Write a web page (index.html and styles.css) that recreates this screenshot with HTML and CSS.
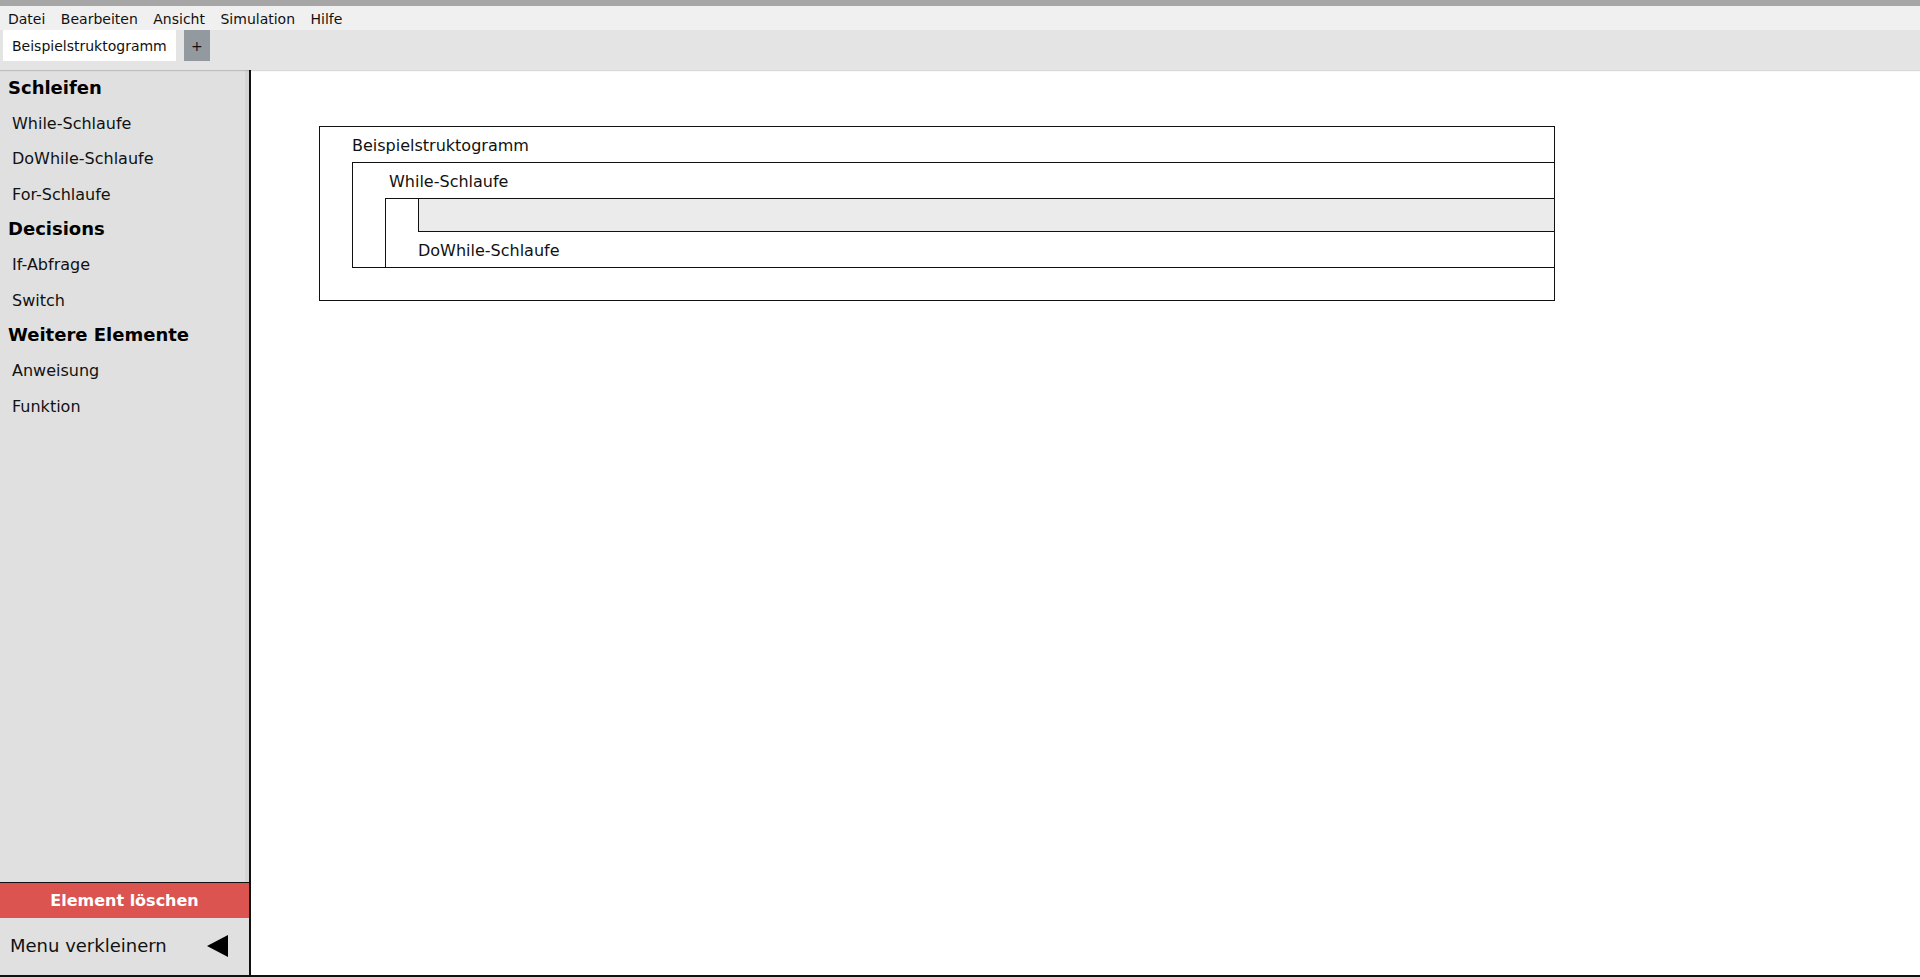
FILE: index.html
```html
<!DOCTYPE html>
<html lang="de">
<head>
  <meta charset="UTF-8" />
  <meta name="viewport" content="width=device-width, initial-scale=1.0" />
  <title>Struktogramm Editor</title>
  <link rel="stylesheet" href="styles.css">
</head>
<body>
  <div class="app">
    <nav class="menubar">
      <span class="menu-item">Datei</span>
      <span class="menu-item">Bearbeiten</span>
      <span class="menu-item">Ansicht</span>
      <span class="menu-item">Simulation</span>
      <span class="menu-item">Hilfe</span>
    </nav>

    <div class="tabbar">
      <div class="tab active">Beispielstruktogramm</div>
      <div class="tab-add">+</div>
    </div>

    <div class="workspace">
      <aside class="sidebar">
        <div class="palette">
          <div class="palette-head">Schleifen</div>
          <div class="palette-item">While-Schlaufe</div>
          <div class="palette-item">DoWhile-Schlaufe</div>
          <div class="palette-item">For-Schlaufe</div>
          <div class="palette-head">Decisions</div>
          <div class="palette-item">If-Abfrage</div>
          <div class="palette-item">Switch</div>
          <div class="palette-head">Weitere Elemente</div>
          <div class="palette-item">Anweisung</div>
          <div class="palette-item">Funktion</div>
        </div>
        <div class="delete-btn">Element löschen</div>
        <div class="collapse">
          <span>Menu verkleinern</span>
          <span class="arrow-left"></span>
        </div>
      </aside>

      <main class="canvas">
        <div class="sg">
          <div class="sg-title">Beispielstruktogramm</div>
          <div class="sg-body">
            <div class="block block-while">
              <div class="block-head">While-Schlaufe</div>
              <div class="block-inner">
                <div class="block block-dowhile">
                  <div class="drop-zone"></div>
                  <div class="block-foot">DoWhile-Schlaufe</div>
                </div>
              </div>
            </div>
          </div>
          <div class="sg-pad"></div>
        </div>
      </main>
    </div>
  </div>
</body>
</html>
```

FILE: styles.css
```css
* {
  box-sizing: border-box;
}
body {
  margin: 0;
  font-family: "DejaVu Sans", Verdana, sans-serif;
  color: #111;
  background: #fff;
}
.app {
  height: 977px;
  display: flex;
  flex-direction: column;
  border-top: 6px solid #a6a6a6;
  border-bottom: 2px solid #111;
}
.menubar {
  height: 24px;
  background: #f0f0f0;
  display: flex;
  align-items: center;
  gap: 15.5px;
  padding: 2px 0 0 8px;
  font-size: 14px;
}
.tabbar {
  height: 40px;
  background: #e4e4e4;
  display: flex;
  align-items: flex-start;
  gap: 8px;
  padding-left: 3px;
  box-shadow: 0 1px 1px rgba(0, 0, 0, 0.15);
  position: relative;
  z-index: 1;
}
.tab {
  height: 31px;
  padding: 0 9px;
  background: #fff;
  display: flex;
  align-items: center;
  font-size: 14px;
}
.tab-add {
  width: 26px;
  height: 31px;
  background: #929aa0;
  display: flex;
  align-items: center;
  justify-content: center;
  font-size: 14px;
  color: #111;
}
.workspace {
  flex: 1;
  display: flex;
  min-height: 0;
}
.sidebar {
  width: 249px;
  background: #e0e0e0;
  display: flex;
  flex-direction: column;
}
.palette {
  flex: 1;
  border-right: 4px solid #d5d5d5;
}
.palette-head,
.palette-item {
  height: 35.33px;
  display: flex;
  align-items: center;
}
.palette-head {
  padding-left: 8px;
  font-size: 18px;
  font-weight: bold;
  color: #000;
}
.palette-item {
  padding: 1px 0 0 12px;
  font-size: 16px;
}
.delete-btn {
  height: 36px;
  border-top: 1px solid #111;
  background: #db5450;
  color: #fff;
  font-weight: bold;
  font-size: 16px;
  display: flex;
  align-items: center;
  justify-content: center;
}
.collapse {
  height: 57px;
  display: flex;
  align-items: center;
  justify-content: space-between;
  padding: 0 21px 2px 10px;
  font-size: 18px;
}
.arrow-left {
  width: 0;
  height: 0;
  border-top: 11.5px solid transparent;
  border-bottom: 11.5px solid transparent;
  border-right: 21px solid #000;
}
.canvas {
  flex: 1;
  background: #fff;
  border-left: 2px solid #111;
  padding: 56px 0 0 68px;
}
.sg {
  width: 1236px;
  border: 1px solid #111;
  font-size: 16px;
}
.sg-title {
  height: 35px;
  padding: 1px 0 0 32px;
  display: flex;
  align-items: center;
}
.sg-body {
  margin-left: 32px;
}
.block-while {
  border-top: 1px solid #111;
  border-left: 1px solid #111;
  border-bottom: 1px solid #111;
}
.block-head {
  height: 35px;
  padding: 1px 0 0 36px;
  display: flex;
  align-items: center;
}
.block-inner {
  margin-left: 32px;
}
.block-dowhile {
  border-top: 1px solid #111;
  border-left: 1px solid #111;
}
.drop-zone {
  height: 33px;
  margin-left: 32px;
  background: #ebebeb;
  border-left: 1px solid #111;
  border-bottom: 1px solid #111;
}
.block-foot {
  height: 35px;
  padding: 1px 0 0 32px;
  display: flex;
  align-items: center;
}
.sg-pad {
  height: 32px;
}
```
